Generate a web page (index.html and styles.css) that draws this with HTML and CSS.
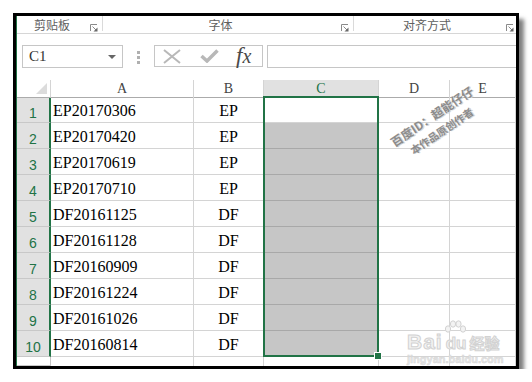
FILE: index.html
```html
<!DOCTYPE html>
<html lang="zh-CN">
<head>
    <meta charset="UTF-8">
    <title>Excel</title>
    <link rel="stylesheet" href="styles.css">
</head>
<body>
    <div class="window">
        <div class="inner">
            <div class="ribbon">
                <div class="group g-clip">剪贴板<span class="launcher"><svg width="8" height="8"><path d="M0.5 7V0.5H7" fill="none" stroke="#8a8a8a"/><path d="M2.5 2.5L6 6" stroke="#8a8a8a"/><path d="M3.5 7.5H7.5V3.5Z" fill="#6a6a6a"/></svg></span></div>
                <div class="group g-font">字体<span class="launcher"><svg width="8" height="8"><path d="M0.5 7V0.5H7" fill="none" stroke="#8a8a8a"/><path d="M2.5 2.5L6 6" stroke="#8a8a8a"/><path d="M3.5 7.5H7.5V3.5Z" fill="#6a6a6a"/></svg></span></div>
                <div class="group g-align">对齐方式<span class="launcher"><svg width="8" height="8"><path d="M0.5 7V0.5H7" fill="none" stroke="#8a8a8a"/><path d="M2.5 2.5L6 6" stroke="#8a8a8a"/><path d="M3.5 7.5H7.5V3.5Z" fill="#6a6a6a"/></svg></span></div>
            </div>

            <div class="formula-bar">
                <div class="name-box"><span>C1</span><span class="drop"></span></div>
                <div class="dots"><svg width="3" height="13"><rect x="0" y="0" width="3" height="3" fill="#b0b0b0"/><rect x="0" y="5" width="3" height="3" fill="#b0b0b0"/><rect x="0" y="10" width="3" height="3" fill="#b0b0b0"/></svg></div>
                <div class="fx-buttons">
                    <svg class="ico-x" width="18" height="15"><path d="M1 1L17 14M17 1L1 14" stroke="#b8b8b8" stroke-width="2"/></svg>
                    <svg class="ico-ok" width="19" height="14"><path d="M1.5 7L7 12L17.5 1.5" fill="none" stroke="#b8b8b8" stroke-width="3.5"/></svg>
                    <span class="fx">f<span>x</span></span>
                </div>
                <div class="fx-input"></div>
            </div>

            <div class="sheet">
                <div class="row head">
                    <div class="corner"></div>
                    <div class="col">A</div>
                    <div class="col">B</div>
                    <div class="col sel">C</div>
                    <div class="col">D</div>
                    <div class="col">E</div>
                </div>
                <div class="row">
                    <div class="num">1</div><div class="cell">EP20170306</div><div class="cell mid">EP</div><div class="cell active"></div><div class="cell"></div><div class="cell"></div>
                </div>
                <div class="row">
                    <div class="num">2</div><div class="cell">EP20170420</div><div class="cell mid">EP</div><div class="cell grey"></div><div class="cell"></div><div class="cell"></div>
                </div>
                <div class="row">
                    <div class="num">3</div><div class="cell">EP20170619</div><div class="cell mid">EP</div><div class="cell grey"></div><div class="cell"></div><div class="cell"></div>
                </div>
                <div class="row">
                    <div class="num">4</div><div class="cell">EP20170710</div><div class="cell mid">EP</div><div class="cell grey"></div><div class="cell"></div><div class="cell"></div>
                </div>
                <div class="row">
                    <div class="num">5</div><div class="cell">DF20161125</div><div class="cell mid">DF</div><div class="cell grey"></div><div class="cell"></div><div class="cell"></div>
                </div>
                <div class="row">
                    <div class="num">6</div><div class="cell">DF20161128</div><div class="cell mid">DF</div><div class="cell grey"></div><div class="cell"></div><div class="cell"></div>
                </div>
                <div class="row">
                    <div class="num">7</div><div class="cell">DF20160909</div><div class="cell mid">DF</div><div class="cell grey"></div><div class="cell"></div><div class="cell"></div>
                </div>
                <div class="row">
                    <div class="num">8</div><div class="cell">DF20161224</div><div class="cell mid">DF</div><div class="cell grey"></div><div class="cell"></div><div class="cell"></div>
                </div>
                <div class="row">
                    <div class="num">9</div><div class="cell">DF20161026</div><div class="cell mid">DF</div><div class="cell grey"></div><div class="cell"></div><div class="cell"></div>
                </div>
                <div class="row">
                    <div class="num">10</div><div class="cell">DF20160814</div><div class="cell mid">DF</div><div class="cell grey"></div><div class="cell"></div><div class="cell"></div>
                </div>
                <div class="row last">
                    <div class="num"></div><div class="cell"></div><div class="cell"></div><div class="cell"></div><div class="cell"></div><div class="cell"></div>
                </div>

                <div class="selection"><span class="handle"></span></div>

                <div class="watermark">
                    <div class="wm1">百度ID：超能仔仔</div>
                    <div class="wm2">本作品原创作者</div>
                </div>

                <div class="baidu">
                    <svg class="paw" width="24" height="18" viewBox="0 0 24 18">
                        <ellipse cx="5" cy="9" rx="2.6" ry="3.2" fill="#f3f3f3" stroke="#d2d2d2"/>
                        <ellipse cx="10" cy="4" rx="2.6" ry="3.2" fill="#f3f3f3" stroke="#d2d2d2"/>
                        <ellipse cx="15.5" cy="4" rx="2.6" ry="3.2" fill="#f3f3f3" stroke="#d2d2d2"/>
                        <ellipse cx="20" cy="9" rx="2.6" ry="3.2" fill="#f3f3f3" stroke="#d2d2d2"/>
                    </svg>
                    <div class="logo-line"><span class="bai">Bai</span><span class="du">du</span><span class="jy">经验</span></div>
                    <div class="url">jingyan.baidu.com</div>
                </div>
            </div>
        </div>
    </div>
</body>
</html>
```

FILE: styles.css
```css
*{
    box-sizing: border-box;
}

body{
    margin: 0;
    background: #fff;
    font-family: "Liberation Sans", "Noto Sans CJK SC", sans-serif;
}

.window{
    margin: 13px 0 0 13px;
    width: 506px;
    height: 356px;
    border: 3px solid #000;
    background: #fff;
    box-shadow: 5px 6px 4px rgba(0, 0, 0, 0.5);
    overflow: hidden;
}

.inner{
    height: 100%;
    border-left: 1px solid #217346;
}

/* ribbon group captions */
.ribbon{
    display: flex;
    height: 18px;
    border-bottom: 1px solid #d6d6d6;
}

.group{
    position: relative;
    padding-right: 16px;
    text-align: center;
    font-family: "Noto Sans CJK SC", sans-serif;
    font-size: 12px;
    line-height: 17px;
    color: #606060;
}

.group::after{
    content: "";
    position: absolute;
    right: 0;
    top: 0;
    height: 15px;
    border-right: 1px solid #dadada;
}

.g-clip{
    width: 86px;
}

.g-font{
    width: 251px;
}

.g-align{
    flex: 1;
}

.g-align::after{
    display: none;
}

.launcher{
    position: absolute;
    right: 5px;
    top: 8px;
    width: 8px;
    height: 8px;
    line-height: 0;
}

.g-align .launcher{
    right: 2px;
}

/* name box + formula input */
.formula-bar{
    display: flex;
    align-items: flex-start;
    height: 46px;
    padding: 11px 0 0 5px;
}

.name-box{
    display: flex;
    align-items: center;
    justify-content: space-between;
    width: 101px;
    height: 23px;
    padding: 0 6px 0 6px;
    border: 1px solid #c6c6c6;
    font-family: "Liberation Serif", serif;
    font-size: 15px;
    color: #333;
}

.drop{
    width: 0;
    height: 0;
    border-left: 4px solid transparent;
    border-right: 4px solid transparent;
    border-top: 4px solid #666;
}

.dots{
    width: 31px;
    padding-top: 6px;
    text-align: center;
    line-height: 0;
}

.fx-buttons{
    display: flex;
    align-items: center;
    width: 109px;
    height: 22px;
    padding-left: 8px;
    border: 1px solid #c6c6c6;
}

.ico-ok{
    margin-left: 19px;
}

.fx{
    margin-left: 17px;
    font-family: "Liberation Serif", serif;
    font-style: italic;
    font-size: 23px;
    line-height: 20px;
    color: #4a4a4a;
}

.fx span{
    font-size: 20px;
}

.fx-input{
    flex: 1;
    height: 23px;
    margin-left: 4px;
    border: 1px solid #c6c6c6;
    border-right: none;
}

/* grid */
.sheet{
    position: relative;
}

.row{
    display: grid;
    grid-template-columns: 34px 143px 70px 115px 71px 1fr;
    height: 26px;
}

.row.head{
    height: 17px;
}

.row.last{
    height: 9px;
}

.corner{
    position: relative;
    background: #fff;
    border-bottom: 1px solid #ababab;
    border-right: 1px solid #d4d4d4;
}

.corner::after{
    content: "";
    position: absolute;
    right: 3px;
    bottom: 3px;
    width: 0;
    height: 0;
    border-left: 11px solid transparent;
    border-bottom: 11px solid #dcdcdc;
}

.col{
    text-align: center;
    font-family: "Liberation Serif", serif;
    font-size: 14px;
    line-height: 17px;
    color: #444;
    border-bottom: 1px solid #ababab;
    border-right: 1px solid #d4d4d4;
}

.col.sel{
    background: #e1e1e1;
    color: #217346;
}

.num{
    display: flex;
    align-items: flex-end;
    justify-content: center;
    padding-bottom: 1px;
    background: #e1e1e1;
    border-right: 2px solid #217346;
    border-bottom: 1px solid #c8c8c8;
    font-size: 14px;
    color: #217346;
}

.last .num{
    background: #fff;
    border-right: 1px solid #c6c6c6;
}

.cell{
    padding: 3px 0 0 2px;
    font-family: "Liberation Serif", serif;
    font-size: 16px;
    line-height: 22px;
    color: #000;
    border-right: 1px solid #d4d4d4;
    border-bottom: 1px solid #d4d4d4;
}

.cell.mid{
    text-align: center;
    padding-left: 0;
}

.cell.grey{
    background: #c6c6c6;
    border-bottom-color: #a8a8a8;
}

.last .cell{
    border-bottom: none;
}

/* column C selection */
.selection{
    position: absolute;
    left: 246px;
    top: 16px;
    width: 116px;
    height: 261px;
    border: 2px solid #217346;
}

.handle{
    position: absolute;
    right: -5px;
    bottom: -5px;
    width: 8px;
    height: 8px;
    background: #217346;
    border: 1px solid #fff;
}

.watermark{
    position: absolute;
    left: 363px;
    top: 24px;
    width: 112px;
    text-align: center;
    transform: rotate(-34deg);
    font-family: "Noto Sans CJK SC", sans-serif;
    font-weight: bold;
    color: #8c8c8c;
    text-shadow: 1px 1px 0 #d8d8d8;
}

.wm1{
    font-size: 12px;
    line-height: 21px;
}

.wm2{
    font-size: 10.5px;
    line-height: 16px;
}

/* faint logo in the corner */
.baidu{
    position: absolute;
    left: 390px;
    top: 240px;
    width: 100px;
    color: #f2f2f2;
}

.paw{
    display: block;
    margin-left: 36px;
}

.logo-line{
    display: flex;
    align-items: baseline;
    margin-top: -6px;
    font-weight: bold;
    line-height: 20px;
    -webkit-text-stroke: 1px #d2d2d2;
}

.bai{
    font-size: 21px;
    letter-spacing: 1px;
}

.du{
    margin-left: 3px;
    font-size: 17px;
}

.jy{
    margin-left: 3px;
    font-family: "Noto Sans CJK SC", sans-serif;
    font-size: 15px;
}

.url{
    margin-top: -1px;
    font-size: 11px;
    line-height: 12px;
    font-weight: bold;
    color: #e6e6e6;
    -webkit-text-stroke: 0.5px #d6d6d6;
}
```
